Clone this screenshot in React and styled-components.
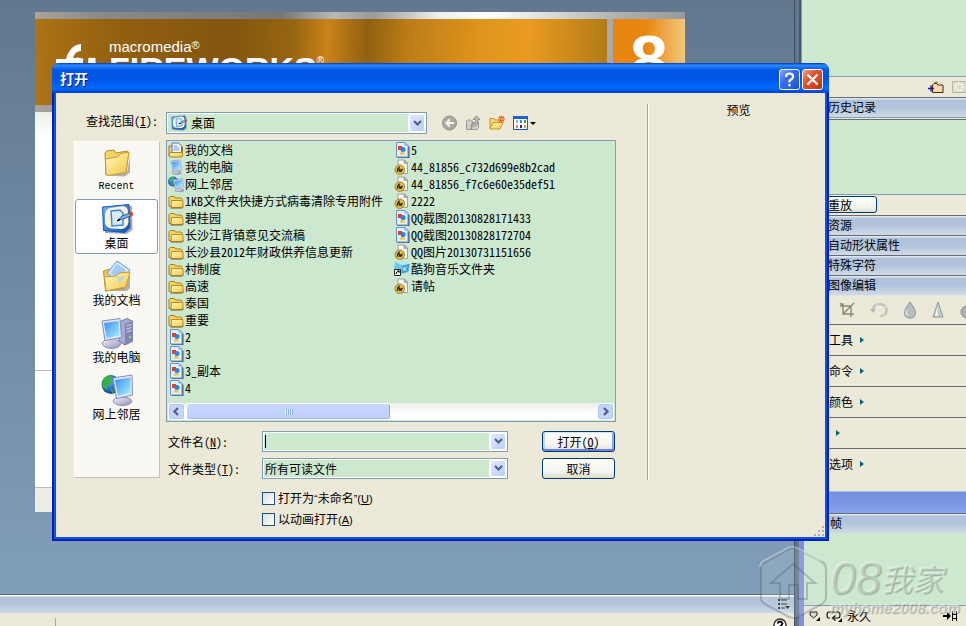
import React from "react";
import styled, { createGlobalStyle, css } from "styled-components";

const c = {
  green: "#cce8cf",
  beige: "#ece9d8",
  line: "#7f9db9",
  dark: "#6a6b70",
};

const song = '"Noto Sans CJK SC", "Liberation Sans", sans-serif';

const Global = createGlobalStyle`
  * { box-sizing: border-box; }
  body { margin: 0; background: ${c.beige}; font: 12px/16px ${song}; color: #000; }
  button, input, select { font: inherit; color: inherit; margin: 0; }
  button { padding: 0; border: 0; background: none; }
  ul { list-style: none; margin: 0; padding: 0; }
  svg { display: block; flex: none; }
`;

const Screen = styled.div`
  position: relative;
  display: grid;
  grid-template-columns: minmax(0, 1fr) 8px 164px;
  min-height: 100vh;
  overflow: hidden;
`;

/* ---------- workspace ---------- */

const Workspace = styled.div`
  display: flex;
  flex-direction: column;
`;

const Canvas = styled.div`
  flex: 1;
  padding: 12px 109px 82px 35px;
  background: linear-gradient(#61788f, #7f9cb9 95%);
`;

const StartPage = styled.div`
  display: flex;
  flex-direction: column;
  height: 100%;
  min-height: 500px;
  background: #fff;
`;

const BannerStrip = styled.div`
  height: 7px;
  background: linear-gradient(90deg, #aaa49a, #8a8a8a 10%, #777 38%, #b8b8b8 46%, #999 52%, #eee 62%, #fff 70%, #b0b0b0 90%, #999);
`;

const Banner = styled.div`
  display: grid;
  grid-template-columns: minmax(0, 1fr) 72px;
  gap: 6px;
  height: 86px;
  background: #a9a9a9;
`;

const BrandPanel = styled.div`
  display: flex;
  gap: 8px;
  padding: 22px 0 0 20px;
  overflow: hidden;
  color: #fff;
  background: linear-gradient(92deg, #ad7417, #92600f 14%, #845510 34%, #96650f 45%, #c98319 51%, #8f600f 58%, #bc7d17 65%, #e0951d 78%, #ea9b20 86%, #b07a18);
`;

const BrandText = styled.div`
  display: flex;
  flex-direction: column;
  font-family: "Liberation Sans", Arial, sans-serif;
`;

const Maker = styled.span`
  font-size: 15px;
  line-height: 11px;
  sup { font-size: 11px; line-height: 0; vertical-align: 3px; }
`;

const Product = styled.span`
  font-size: 34px;
  line-height: 34px;
  font-weight: 700;
  sup { font-size: 10px; line-height: 0; font-weight: 400; vertical-align: 17px; }
`;

const VersionPanel = styled.div`
  overflow: hidden;
  padding-top: 10px;
  text-align: center;
  color: #fff;
  font: 700 68px/60px "Liberation Sans", Arial, sans-serif;
  background: linear-gradient(90deg, #e8860f 45%, #f3c77c);
`;

const PageHead = styled.div`
  height: 26px;
  background: linear-gradient(#eeeee8, #fff);
`;
const PageTop = styled.div`
  flex: 2;
  border-bottom: 1px solid #bbb;
`;
const PageBottom = styled.div`
  flex: 1;
  border-bottom: 1px solid #bbb;
`;
const PageFoot = styled.div`
  height: 24px;
  background: #eeeee6;
`;

const DockTitle = styled.div`
  display: flex;
  justify-content: flex-end;
  align-items: center;
  height: 20px;
  padding-right: 4px;
  border-top: 1px solid #5f6d7c;
  border-bottom: 1px solid #e6eaf0;
  background: linear-gradient(#fff 1px, #b0c2da 2px, #b2c3db 50%, #cfd9e8);
`;

const DockBody = styled.div`
  display: flex;
  justify-content: space-between;
  height: 12px;
  padding: 4px 7px 0 55px;
  overflow: hidden;
  background: ${c.beige};
`;

const DockRule = styled.span`
  width: 1px;
  height: 12px;
  background: #aca899;
`;

const Splitter = styled.div`
  background: linear-gradient(90deg, #3f4f60 1px, #5d7388 1px, #64798f 5px, #45576a 5px, #45576a 7px, #7f9db9 7px);
`;

/* ---------- side panels ---------- */

const Side = styled.aside`
  display: flex;
  flex-direction: column;
  background: ${c.beige};
`;

const GreenArea = styled.div`
  flex: ${(p) => (p.$grow ? "1" : "none")};
  height: ${(p) => p.$h || "auto"};
  border-bottom: 1px solid ${c.line};
  background: ${c.green};
`;

const SideIcons = styled.div`
  display: flex;
  justify-content: flex-end;
  align-items: center;
  gap: 8px;
  height: 20px;
`;

const PanelTitle = styled.button`
  display: block;
  width: 100%;
  height: 20px;
  padding: 0 0 2px 26px;
  border-top: 1px solid ${c.dark};
  text-align: left;
  line-height: 17px;
  background: linear-gradient(#dfe6ef 1px, #b0c2da 2px, #b2c4db 50%, #d0dae7);
`;

const HistoryGap = styled.div`
  height: 3px;
  border-top: 1px solid ${c.line};
  border-bottom: 1px solid ${c.dark};
`;

const ReplayRow = styled.div`
  height: 20px;
  padding-left: 10px;
`;

const ReplayButton = styled.button`
  display: block;
  width: 65px;
  height: 17px;
  margin-top: 1px;
  padding-left: 15px;
  border: 1px solid #003c74;
  border-radius: 3px;
  text-align: left;
  line-height: 14px;
  background: linear-gradient(#fff, #f0f0ea 80%, #dcd8cc);
`;

const ToolStrip = styled.div`
  display: flex;
  align-items: center;
  gap: 15px;
  height: 29px;
  padding-left: 37px;
  overflow: hidden;
  border-top: 1px solid #dfe4ea;
`;

const MenuRow = styled.button`
  display: flex;
  align-items: center;
  gap: 7px;
  width: 100%;
  height: 31px;
  padding-left: 27px;
  border-top: 1px solid ${c.dark};
`;

const LowerGroup = styled.div`
  display: flex;
  flex: 1;
  flex-direction: column;
  margin: 12px 0 0 -3px;
  border-left: 5px solid #7e8fe2;
`;

const BlueBar = styled.div`
  height: 22px;
  border-top: 1px solid #a6bdf0;
  background: linear-gradient(#7491e0, #7b99e4 60%, #86a5ec);
`;

const FrameBar = styled.div`
  display: flex;
  align-items: center;
  gap: 5px;
  height: 20px;
  padding: 0 9px 0 5px;
  span { flex: 1; }
`;

/* ---------- dialog ---------- */

const Dialog = styled.section`
  position: absolute;
  top: 63px;
  left: 52px;
  right: 137px;
  border: 2px solid #0620b0;
  border-top: 0;
  border-radius: 7px 7px 0 0;
  background: ${c.beige};
`;

const TitleBar = styled.header`
  display: flex;
  align-items: center;
  gap: 2px;
  height: 30px;
  margin: 0 -2px;
  padding: 2px 6px 0 8px;
  border-radius: 7px 7px 0 0;
  background: linear-gradient(#0a49c8 1px, #3090ff 2px, #1a78f5 4px, #0458e6 7px, #0054e3 16px, #0066ff 23px, #0067ff 26px, #0046d0 29px);
`;

const Title = styled.h1`
  flex: 1;
  margin: 0;
  padding-bottom: 2px;
  color: #fff;
  font-size: 14px;
  line-height: 18px;
  text-shadow: 1px 1px 0 #0a1883;
`;

const CaptionButton = styled.button`
  display: grid;
  place-items: center;
  width: 21px;
  height: 21px;
  border: 1px solid #fff;
  border-radius: 3px;
  background: ${(p) =>
    p.$close
      ? "linear-gradient(135deg, #f0a088, #e0512c 40%, #d8401a 75%, #b52c08)"
      : "linear-gradient(135deg, #8aa8f5, #3a6ae8 40%, #2860ea 75%, #1848c0)"};
`;

const Body = styled.div`
  display: flex;
  align-items: flex-start;
  padding: 11px 0 10px 18px;
  border: 2px solid #0a50ea;
  border-top: 0;
`;

const Main = styled.form`
  flex: 1;
  min-width: 0;
  padding: 8px 31px 0 0;
`;

const Preview = styled.div`
  width: 178px;
  height: 376px;
  padding-left: 4px;
  border-left: 1px solid #aca899;
  box-shadow: inset 1px 0 #fff;
  line-height: 12px;
  text-align: center;
`;

const LookRow = styled.div`
  display: flex;
  align-items: center;
  height: 22px;
`;

const half = css`
  font-feature-settings: "hwid";
`;

const LookLabel = styled.label`
  ${half}
  width: 92px;
  padding: 0 0 4px 12px;
`;

const Combo = styled.div`
  position: relative;
  display: flex;
  align-items: center;
  flex: ${(p) => (p.$w ? "none" : "1")};
  width: ${(p) => p.$w || "auto"};
  height: ${(p) => p.$h || "21px"};
  padding-left: ${(p) => (p.$icon ? "4px" : "2px")};
  border: 1px solid ${c.line};
  background: ${c.green};
  box-shadow: inset 0 0 0 1px #fff;
`;

const field = css`
  flex: 1;
  align-self: stretch;
  min-width: 0;
  padding: 0 18px 0 1px;
  border: 0;
  outline: 0;
  appearance: none;
  background: none;
`;
const Select = styled.select`
  ${field}
  padding-left: ${(p) => p.$pad || "0"};
`;
const TextInput = styled.input`
  ${field}
`;
const Caret = styled.span`
  width: 1px;
  height: 13px;
  background: #000;
`;

const Drop = styled.span`
  position: absolute;
  top: 1px;
  right: 1px;
  bottom: 1px;
  display: grid;
  place-items: center;
  width: 17px;
  border: 1px solid #fff;
  border-left-width: 2px;
  border-radius: 3px;
  background: linear-gradient(135deg, #e0e9fe, #b9cdfb);
  pointer-events: none;
`;

const NavTools = styled.div`
  display: flex;
  align-items: center;
  gap: 8px;
  margin-left: 14px;
`;

const NavButton = styled.button`
  display: flex;
  align-items: center;
  gap: 2px;
`;

const Middle = styled.div`
  display: flex;
  align-items: flex-start;
  gap: 6px;
  margin-top: 6px;
`;

const Places = styled.nav`
  display: flex;
  flex-direction: column;
  gap: 2px;
  width: 86px;
  height: 337px;
  margin-top: 1px;
  border: 1px solid #fff;
  border-color: #fff #c6c3b4 #c6c3b4 #fff;
  background: #f9f8f3;
`;

const Place = styled.button`
  display: flex;
  flex-direction: column;
  align-items: center;
  height: 55px;
  margin-right: 1px;
  padding-top: 3px;
  border: 1px solid transparent;
  border-radius: 3px;
  line-height: 15px;
  ${(p) => p.$on && "border-color: #7f9db9; background: #fff;"}
  span { ${(p) => p.$mono && 'font: 10px/17px "Liberation Mono", monospace;'} }
`;

const Right = styled.div`
  flex: 1;
  min-width: 0;
`;

const ListBox = styled.div`
  display: flex;
  flex-direction: column;
  justify-content: space-between;
  height: 282px;
  padding: 1px;
  border: 1px solid ${c.line};
  background: ${c.green};
`;

const Files = styled.ul`
  display: grid;
  grid-template-rows: repeat(15, 17px);
  grid-template-columns: 226px 1fr;
  grid-auto-flow: column;
`;

const FileButton = styled.button`
  ${half}
  display: flex;
  align-items: center;
  gap: 1px;
  height: 17px;
  padding-bottom: 2px;
  line-height: 15px;
  white-space: nowrap;
`;

const ScrollBar = styled.div`
  display: flex;
  gap: 1px;
  height: 17px;
  background: linear-gradient(#eeede5, #fff 60%);
`;
const ScrollButton = styled.button`
  display: grid;
  place-items: center;
  flex: none;
  width: 17px;
  border: 1px solid #fff;
  border-radius: 3px;
  background: #c4d5fc;
  box-shadow: inset 0 0 0 1px #b5c8f5;
`;
const ScrollTrack = styled.div`
  flex: 1;
`;
const Thumb = styled.div`
  display: grid;
  place-items: center;
  width: 50%;
  height: 17px;
  border: 1px solid #fff;
  border-radius: 3px;
  background: linear-gradient(#cad8fe, #bbd0fc);
  box-shadow: inset -1px 0 #8aa6dc, inset 0 -1px #a5bcea;
`;

const FormGrid = styled.div`
  display: grid;
  grid-template-columns: 96px minmax(0, 1fr) 73px;
  align-items: center;
  row-gap: 6px;
  padding: 9px 1px 0 0;
`;
const FormLabel = styled.label`
  ${half}
  padding-left: 2px;
`;
const FormField = styled.div`
  display: flex;
  padding-right: 34px;
`;

const PushButton = styled.button`
  ${half}
  height: 21px;
  border: 1px solid #003c74;
  border-radius: 3px;
  line-height: 17px;
  background: linear-gradient(#fff, #f3f3ee 70%, #dedacb);
  ${(p) => p.$primary && "box-shadow: inset 0 1px #cee7ff, inset 0 -2px #6982ee, inset 2px 0 #bcd4f6, inset -2px 0 #89ade4;"}
`;

const Checks = styled.div`
  display: flex;
  flex-direction: column;
  gap: 5px;
  padding: 11px 0 0 96px;
`;
const CheckLabel = styled.label`
  display: flex;
  align-items: center;
  gap: 3px;
  height: 16px;
  line-height: 16px;
  input {
    appearance: none;
    width: 13px;
    height: 13px;
    border: 1px solid #1c5180;
    background: linear-gradient(135deg, #dcdcd7, #fff);
  }
`;
const Latin = styled.span`
  font-family: "Liberation Sans", Arial, sans-serif;
  font-size: 11px;
  line-height: 1;
`;

const Grip = styled.div`
  position: absolute;
  right: 2px;
  bottom: 2px;
`;

/* ---------- watermark ---------- */

const Watermark = styled.div`
  position: absolute;
  right: 4px;
  bottom: 5px;
  display: flex;
  align-items: flex-end;
  pointer-events: none;
  color: rgba(240, 244, 236, 0.35);
  text-shadow: 1px 1px 1px rgba(70, 90, 80, 0.4), -1px -1px 0 rgba(255, 255, 255, 0.3);
`;
const MarkText = styled.div`
  display: flex;
  flex-direction: column;
  width: 132px;
  margin-left: 2px;
  padding-bottom: 3px;
  white-space: nowrap;
`;
const MarkName = styled.span`
  display: flex;
  align-items: center;
  font-style: italic;
  font-size: 31px;
  line-height: 40px;
  b { font: italic 400 46px/40px "Liberation Sans", Arial, sans-serif; }
`;
const MarkSite = styled.span`
  font: italic 700 15px/20px "Liberation Sans", Arial, sans-serif;
`;

/* ---------- drawings ---------- */

const Defs = () => (
  <svg width="0" height="0" aria-hidden="true">
    <defs>
      <linearGradient id="fold" x1="0" y1="0" x2="1" y2="1">
        <stop offset="0" stopColor="#fffbc0" />
        <stop offset="1" stopColor="#f2c644" />
      </linearGradient>
      <linearGradient id="scr" x1="0" y1="0" x2="1" y2="1">
        <stop offset="0" stopColor="#3b8df0" />
        <stop offset="1" stopColor="#a8f0ff" />
      </linearGradient>
      <linearGradient id="blu" x1="0" y1="0" x2="1" y2="1">
        <stop offset="0" stopColor="#6cb8f8" />
        <stop offset="1" stopColor="#0c50b8" />
      </linearGradient>
      <linearGradient id="gry" x1="0" y1="0" x2="1" y2="1">
        <stop offset="0" stopColor="#f4f4fc" />
        <stop offset="1" stopColor="#9090b8" />
      </linearGradient>
      <radialGradient id="globe" cx="0.4" cy="0.35" r="0.7">
        <stop offset="0" stopColor="#58b0ff" />
        <stop offset="1" stopColor="#0a3a98" />
      </radialGradient>
    </defs>
  </svg>
);

const Folder16 = () => (
  <svg width="16" height="16" viewBox="0 0 16 16">
    <path d="M1 13.500V4.500L2 3.500h4.500l1 1.500h5.500l1.500 1.500v7z" fill="#f5d568" stroke="#b07c18" />
    <path d="M3.500 7.500h10.500l1 1v5l-1.500 1.200H3z" fill="url(#fold)" stroke="#c08a20" />
    <path d="M2.500 15h12l1-1.500" fill="none" stroke="#6a5420" strokeWidth=".8" />
  </svg>
);
const DocFolder16 = () => (
  <svg width="16" height="16" viewBox="0 0 16 16">
    <path d="M1 14V4h4l1 1h8.500v9z" fill="#f5d568" stroke="#a87410" />
    <path d="M4 1h6.500L13.500 4v7.500H4z" fill="#f6faff" stroke="#4a78c0" />
    <path d="M5.500 4h4M5.500 6h6M5.500 8h6" stroke="#6fa0e0" />
    <path d="M1 14l1-3.500h12.500V14l-1 1H2z" fill="url(#fold)" stroke="#b8821a" />
  </svg>
);
const Computer16 = () => (
  <svg width="16" height="16" viewBox="0 0 16 16">
    <path d="M4 13l4-2 5 2v1.500l-4 1-5-1z" fill="url(#gry)" stroke="#8888a8" strokeWidth=".6" />
    <path d="M3 2l9-1 1.500 10L5 12z" fill="#d4dcf4" stroke="#8a98c8" strokeWidth=".7" />
    <path d="M4 3l7-.8 1.200 7.500L5.600 10.700z" fill="url(#scr)" />
  </svg>
);
const Network16 = () => (
  <svg width="16" height="16" viewBox="0 0 16 16">
    <circle cx="5" cy="5.500" r="5" fill="url(#globe)" />
    <path d="M1 4c2-4 5-3 6-1-3 0-2 3-4 3zM2 8l3-1 1 3z" fill="#3cb848" />
    <path d="M7 14l4-2 5 1.500v1.500l-4 1-5-1z" fill="url(#gry)" stroke="#8888a8" strokeWidth=".6" />
    <path d="M5.500 4l9-1.500 1 8-8.500 1.800z" fill="#dce4fa" stroke="#8a98c8" strokeWidth=".7" />
    <path d="M6.600 5l7-1.200.8 5.700-6.700 1.400z" fill="url(#scr)" />
  </svg>
);
const Image16 = () => (
  <svg width="16" height="16" viewBox="0 0 16 16">
    <path d="M3.500 2h8l4 3v11h-12z" fill="#44597c" />
    <path d="M2.500.5h8.500l3 3v11.500h-11.500z" fill="#e4effc" stroke="#6890cc" />
    <path d="M10.500.5v3h3.500z" fill="#7cacec" />
    <path d="M5.500 12.500l2.500-4 3.500 4z" fill="#f6c21c" />
    <path d="M4 4h4v4H4z" fill="#f23a10" />
    <circle cx="9" cy="7.500" r="2.500" fill="#1f88ee" />
  </svg>
);
const Fw16 = () => (
  <svg width="16" height="16" viewBox="0 0 16 16">
    <path d="M4 1h6.500L13.500 4v10.500H4z" fill="#f6f6f4" stroke="#a0a0a0" />
    <path d="M10 1v3.500h3.500z" fill="#b0b0b0" stroke="#888" strokeWidth=".5" />
    <circle cx="5.800" cy="10.700" r="4.800" fill="#f0bc34" stroke="#8a7430" strokeWidth=".8" />
    <path d="M3 12.800l1.500-4q.5-1 1.500-.6M3 10h2.500l-.2 2.200 1.200-.2.500-1.700.3 1.700 1.200-2.200" fill="none" stroke="#14284c" strokeWidth="1.200" />
  </svg>
);
const Kugou16 = () => (
  <svg width="16" height="16" viewBox="0 0 16 16">
    <path d="M1 1l9-.5 6 2-1.500 8.500-8 2L0 9z" fill="#6fc8ee" />
    <path d="M1 1l9-.5 6 2-7 2z" fill="#b5ecfa" />
    <path d="M8.500 4.500L15.500 3 14 10.500l-6 2z" fill="#3a9fd8" />
    <path d="M10 6v4m3-4.500l-2.500 2.500 2 1.500" stroke="#e4faff" fill="none" />
    <path d="M.5 8.500h6v6h-6z" fill="#fff" stroke="#222" />
    <path d="M2 13q0-3 3-2.500M3.500 9.800h1.700v2" fill="none" stroke="#000" />
  </svg>
);
const Desktop = ({ size }) => (
  <svg width={size} height={size} viewBox="0 0 32 32">
    <path d="M4 5l27-2 .5 24-6 4L4 30z" fill="#55617c" opacity=".55" />
    <path d="M1.500 4L28 1.500l1 23-5 5L2.500 27.500z" fill="url(#blu)" stroke="#1c58b0" />
    <path d="M9 5l13-2q5 1 5 6l.5 10q-1 6-7 7l-10-.5q-6-1-6.500-6L4 11q1-5 5-6z" fill="#fbf3d4" />
    <path d="M10 8l9-1 3 3v12l-11 1z" fill="#d8ecfd" stroke="#3c8ae0" strokeWidth="1.500" />
    <path d="M17 17l4-4 8-3 1 3-8 3z" fill="#80b6e8" stroke="#285890" />
    <circle cx="30" cy="11" r="2" fill="#e03818" />
    <path d="M16 18l2-2 1 1z" fill="#000" stroke="#000" />
  </svg>
);
const Folder32 = () => (
  <svg width="32" height="32" viewBox="0 0 32 32">
    <path d="M6 29.500l20-3 3-16v16l-5 4z" fill="#6a6a60" opacity=".5" />
    <path d="M4 7l2-2 7-1 2 3 11-2 1.500 1.500L25 26.500 5 29z" fill="#f3d468" stroke="#b58d28" />
    <path d="M4.500 13l13-2.500 2-3L28 6l-3 20.500-18 3-2-1.500z" fill="url(#fold)" stroke="#c69b30" />
  </svg>
);
const Docs32 = () => (
  <svg width="32" height="32" viewBox="0 0 32 32">
    <path d="M5 31l20-3 4-15v15l-3 3z" fill="#6a6a60" opacity=".5" />
    <path d="M2.500 11l7-2 3 3 14-1-2 17-20 3z" fill="#f0cb58" stroke="#b58d28" />
    <path d="M16 1l13 9-10 14L6 13z" fill="#cfe4fb" stroke="#6a9ad8" />
    <path d="M16 4l9 6.500-7 9-8-6.500z" fill="#8fbcf0" opacity=".7" />
    <path d="M3.500 17l12-1 3-3 10.500-1-4 15-20 4z" fill="url(#fold)" stroke="#c69b30" />
    <path d="M16 17l8-1-6 8z" fill="#a8d4f4" opacity=".8" />
  </svg>
);
const Computer32 = () => (
  <svg width="32" height="32" viewBox="0 0 32 32">
    <path d="M18 5l8-3.500 6 3V24l-8 4-6-4z" fill="#a7a9d0" stroke="#7478a8" />
    <path d="M24 7l8-3v20l-8 4z" fill="#8084b4" />
    <path d="M25.500 9l5-1.500M25.500 12l5-1.500M25.500 15l5-1.500" stroke="#d8dcf4" />
    <circle cx="29" cy="20" r="1.300" fill="#74e860" />
    <path d="M1 26q2-4 8-4 8 0 11 4-1 5-9 5.500Q2 31 1 26z" fill="url(#gry)" stroke="#8c8cac" />
    <path d="M9 22l6-1 1 5-6 1z" fill="#c4c4dc" />
    <path d="M1 4l18-2.500 1.500 19L4 23.500z" fill="#e0e6f8" stroke="#8490bc" />
    <path d="M3 6l14.500-2 1 14.500L5.500 21z" fill="url(#scr)" />
  </svg>
);
const Network32 = () => (
  <svg width="32" height="32" viewBox="0 0 32 32">
    <circle cx="10" cy="10.500" r="9.500" fill="url(#globe)" />
    <path d="M3 4q5-4 9-3l-3 5 2 3-4 2-1 5-4-3q-2-5 1-9zM9 15l4 1-1 4z" fill="#38b040" />
    <path d="M12 27q2-4 9-4 8 0 10 4-1 4-9 4.500-8 0-10-4.500z" fill="url(#gry)" stroke="#8c8cac" />
    <path d="M12 4l19-3 .5 20-16 3.500z" fill="#e0e6f8" stroke="#8490bc" />
    <path d="M14 6l15.500-2.500v15.500L17 21.500z" fill="url(#scr)" />
  </svg>
);
const Back = () => (
  <svg width="16" height="16" viewBox="0 0 16 16">
    <circle cx="8.500" cy="8" r="7" fill="#aaa9a2" stroke="#8f8e88" />
    <path d="M13 8H5.500M8.800 4.500L5.300 8l3.500 3.500" fill="none" stroke="#f6f5ee" strokeWidth="2" />
  </svg>
);
const UpLevel = () => (
  <svg width="16" height="16" viewBox="0 0 16 16">
    <path d="M1.500 14.500V6l1-1h3l1 1h1L6 14.500zM6 14.500l2-7h5.500v5l-1.500 2z" fill="#d2d0c8" stroke="#96958f" />
    <path d="M6 10q5-1 4.500-5.500H8L11.500.7 15 4.500h-2Q14 11 6 12z" fill="#bab9b3" stroke="#8a8984" strokeWidth=".8" />
  </svg>
);
const NewFolder = () => (
  <svg width="16" height="16" viewBox="0 0 16 16">
    <path d="M1 13.500v-10h4l1 1.500h5v3" fill="#f6d86c" stroke="#c4952c" />
    <path d="M1 14l3-6.500h10l-3 6.500z" fill="url(#fold)" stroke="#c4952c" />
    <path d="M12.500.5v7M9 4h7M10 1.500l5 5M15 1.500l-5 5" stroke="#f05020" strokeWidth="1.200" />
    <circle cx="12.500" cy="4" r="1.300" fill="#fcc040" />
  </svg>
);
const Views = () => (
  <svg width="15" height="14" viewBox="0 0 15 14">
    <path d="M.5.5h14v13H.5z" fill="#fff" stroke="#0c5ad0" />
    <path d="M0 0h15v3H0z" fill="#1464d8" />
    <path d="M3 4h2v3H3z" fill="#a8b4c8" />
    <path d="M7 4h2v3H7z" fill="#48b" />
    <path d="M11 4h2v3h-2z" fill="#38a038" />
    <path d="M3 9h2v3H3z" fill="#f08060" />
    <path d="M7 9h2v3H7z" fill="#103890" />
    <path d="M11 9h2v3h-2z" fill="#c8a820" />
  </svg>
);
const DownTri = () => (
  <svg width="6" height="3" viewBox="0 0 6 3"><path d="M0 0h6L3 3z" /></svg>
);
const Chevron = ({ d = "M1 2l3.500 3.500L8 2" }) => (
  <svg width="9" height="9" viewBox="0 0 9 9">
    <path d={d} fill="none" stroke="#4d6185" strokeWidth="2.200" />
  </svg>
);
const RightTri = () => (
  <svg width="4" height="6" viewBox="0 0 4 6"><path d="M0 0l4 3-4 3z" fill="#006478" /></svg>
);

const Logo = () => (
  <svg width="46" height="44" viewBox="0 0 46 44">
    <path d="M26 3v7q-6 0-8 7h4l-6 27H6l6-19H1v-7h10Q15 4 26 3z" fill="#fff" />
    <path d="M25 17q-4 22 4 22 6 0 8-22 0 22 5 22" fill="none" stroke="#fff" strokeWidth="7" />
  </svg>
);

const CropTool = () => (
  <svg width="16" height="16" viewBox="0 0 16 16">
    <path d="M4 1v11h11M1 4h11v11M1 1l3 3M5 11l10-10" fill="none" stroke="#8d8c84" strokeWidth="1.500" />
  </svg>
);
const RotateTool = () => (
  <svg width="18" height="16" viewBox="0 0 18 16">
    <path d="M3 9q0-7 7-7 7 1 6.500 7-1 5-6 5" fill="none" stroke="#c2c2c0" strokeWidth="2.500" strokeDasharray="8 1" />
    <path d="M0 7h6l-3 4z" fill="#b8b8b6" />
  </svg>
);
const DropTool = () => (
  <svg width="14" height="18" viewBox="0 0 14 18">
    <path d="M7 1q6 8 5.500 11.500Q12 17 7 17t-5.500-4.500Q1 9 7 1z" fill="#b7bfbf" stroke="#8b9496" />
    <path d="M4 9q-2 4 1 5" stroke="#fff" fill="none" />
  </svg>
);
const SharpTool = () => (
  <svg width="12" height="18" viewBox="0 0 12 18">
    <path d="M6 1l5 15H1z" fill="#c2cccc" stroke="#929a9a" />
    <path d="M5.500 5v10H3z" fill="#f6f8f8" />
  </svg>
);
const BallTool = () => (
  <svg width="14" height="18" viewBox="0 0 14 18">
    <circle cx="8" cy="11" r="6" fill="#b0b0ac" stroke="#85857f" />
  </svg>
);

const HexMark = () => (
  <svg width="70" height="76" viewBox="0 0 70 76" fill="none" strokeWidth="2">
    <g stroke="#405868" strokeOpacity=".3">
      <path d="M3 23q0-4 4-6L31 4q5-2 9 0l24 13q4 2 4 7v28q0 4-4 7L40 72q-4 2-9 0L7 59q-4-2-4-6z" fill="#d8e4dc" fillOpacity=".16" />
      <path d="M13 38l22-19 22 19h-8v16h-9V40h-9v14h-9V38z" strokeWidth="2" />
    </g>
    <path d="M2 22q0-4 4-6L30 3q5-2 9 0l24 13" stroke="#fff" strokeOpacity=".35" />
  </svg>
);

/* ---------- data ---------- */

const files = [
  [DocFolder16, "我的文档"],
  [Computer16, "我的电脑"],
  [Network16, "网上邻居"],
  [Folder16, "1KB文件夹快捷方式病毒清除专用附件"],
  [Folder16, "碧桂园"],
  [Folder16, "长沙江背镇意见交流稿"],
  [Folder16, "长沙县2012年财政供养信息更新"],
  [Folder16, "村制度"],
  [Folder16, "高速"],
  [Folder16, "泰国"],
  [Folder16, "重要"],
  [Image16, "2"],
  [Image16, "3"],
  [Image16, "3_副本"],
  [Image16, "4"],
  [Image16, "5"],
  [Fw16, "44_81856_c732d699e8b2cad"],
  [Fw16, "44_81856_f7c6e60e35def51"],
  [Fw16, "2222"],
  [Image16, "QQ截图20130828171433"],
  [Image16, "QQ截图20130828172704"],
  [Fw16, "QQ图片20130731151656"],
  [Kugou16, "酷狗音乐文件夹"],
  [Fw16, "请帖"],
];

const places = [
  [<Folder32 key="i" />, "Recent"],
  [<Desktop key="i" size={32} />, "桌面"],
  [<Docs32 key="i" />, "我的文档"],
  [<Computer32 key="i" />, "我的电脑"],
  [<Network32 key="i" />, "网上邻居"],
];

const StartScreen = () => (
  <Workspace>
    <Canvas>
      <StartPage>
        <BannerStrip />
        <Banner>
          <BrandPanel>
            <Logo />
            <BrandText>
              <Maker>macromedia<sup>®</sup></Maker>
              <Product>FIREWORKS<sup>®</sup></Product>
            </BrandText>
          </BrandPanel>
          <VersionPanel>8</VersionPanel>
        </Banner>
        <BannerStrip />
        <PageHead />
        <PageTop />
        <PageBottom />
        <PageFoot />
      </StartPage>
    </Canvas>
    <DockTitle>
      <svg width="13" height="12" viewBox="0 0 13 12">
        <path d="M1 1h2v2H1zM1 5h2v2H1zM1 9h2v2H1zM4 1.500h6v1H4zM4 5.500h6v1H4zM4 9.500h4v1H4zM8 8h5l-2.500 3z" fill="#222" />
      </svg>
    </DockTitle>
    <DockBody>
      <DockRule />
      <svg width="14" height="14" viewBox="0 0 14 14">
        <circle cx="7" cy="7" r="6" fill="#fff" stroke="#333" strokeWidth="1.500" />
        <path d="M4.500 5.500Q5 3.500 7 3.500t2.500 2Q9 7 7 8.500v2" fill="none" stroke="#000" strokeWidth="1.800" />
      </svg>
    </DockBody>
  </Workspace>
);

const SidePanels = () => (
  <Side>
    <GreenArea $h="77px" />
    <SideIcons>
      <svg width="16" height="13" viewBox="0 0 16 13">
        <path d="M4.500 11.500V4l1.500-1.500h3l1 1.500h5v7.500z" fill="#fcd8a8" stroke="#3c2c18" />
        <path d="M6 2q2-2 4-.5" stroke="#8a7a30" fill="none" />
        <path d="M0 7.500h6M3 4.500v6" stroke="#2018a0" strokeWidth="1.500" fill="none" />
      </svg>
      <svg width="14" height="12" viewBox="0 0 14 12">
        <path d="M.5.500h14v11H.5z" fill="#dedccd" stroke="#b8b6a8" />
        <circle cx="7" cy="6" r="3.500" fill="none" stroke="#fff" strokeWidth="2" strokeDasharray="1.500 1.500" />
      </svg>
    </SideIcons>
    <PanelTitle>历史记录</PanelTitle>
    <HistoryGap />
    <GreenArea $h="75px" />
    <ReplayRow>
      <ReplayButton>重放</ReplayButton>
    </ReplayRow>
    <PanelTitle>资源</PanelTitle>
    <PanelTitle>自动形状属性</PanelTitle>
    <PanelTitle>特殊字符</PanelTitle>
    <PanelTitle>图像编辑</PanelTitle>
    <ToolStrip>
      <CropTool />
      <RotateTool />
      <DropTool />
      <SharpTool />
      <BallTool />
    </ToolStrip>
    {["工具", "命令", "颜色", "", "选项"].map((t) => (
      <MenuRow key={t} aria-label={t || "子菜单"}>
        <span>{t}</span>
        <RightTri />
      </MenuRow>
    ))}
    <LowerGroup>
      <BlueBar />
      <PanelTitle>帧</PanelTitle>
      <GreenArea $grow />
      <FrameBar>
        <svg width="12" height="12" viewBox="0 0 12 12">
          <path d="M1 2h7v3L4.500 8 1 5z" fill="#d8d8d0" stroke="#222" />
          <path d="M11 7v4H7z" />
        </svg>
        <svg width="16" height="12" viewBox="0 0 16 12">
          <path d="M4 8H2.500Q1 8 1 5t2-3h9q2 0 2 3t-2 3H8M9.500 5.500L6.500 8l3 2.500" fill="none" stroke="#111" strokeWidth="1.200" />
          <path d="M16 8v4h-4z" />
        </svg>
        <span>永久</span>
        <svg width="14" height="10" viewBox="0 0 14 10">
          <path d="M0 4h4V1l4 4-4 4V6H0z" />
          <path d="M9.500 0v10M13.500 0v10M9.500 3.500h4M9.500 7.500h4" stroke="#000" />
        </svg>
      </FrameBar>
    </LowerGroup>
  </Side>
);

const OpenDialog = () => (
  <Dialog role="dialog" aria-labelledby="dlg-title">
    <TitleBar>
      <Title id="dlg-title">打开</Title>
      <CaptionButton aria-label="帮助">
        <svg width="13" height="15" viewBox="0 0 13 15">
          <path d="M3 5q0-3.500 3.500-3.500T10 4.500q0 2-2 3T6.500 10.500M6.500 12v2.200" fill="none" stroke="#fff" strokeWidth="2.200" />
        </svg>
      </CaptionButton>
      <CaptionButton $close aria-label="关闭">
        <svg width="13" height="13" viewBox="0 0 13 13">
          <path d="M1.500 1.500l10 10M11.500 1.500l-10 10" stroke="#fff" strokeWidth="2.200" />
        </svg>
      </CaptionButton>
    </TitleBar>
    <Body>
      <Main onSubmit={(e) => e.preventDefault()}>
        <LookRow>
          <LookLabel htmlFor="look">查找范围(<u>I</u>):</LookLabel>
          <Combo $w="261px" $h="22px" $icon>
            <Desktop size={16} />
            <Select id="look" $pad="4px">
              <option>桌面</option>
            </Select>
            <Drop><Chevron /></Drop>
          </Combo>
          <NavTools>
            <NavButton type="button" aria-label="后退"><Back /></NavButton>
            <NavButton type="button" aria-label="向上一级"><UpLevel /></NavButton>
            <NavButton type="button" aria-label="新建文件夹"><NewFolder /></NavButton>
            <NavButton type="button" aria-label="查看"><Views /><DownTri /></NavButton>
          </NavTools>
        </LookRow>
        <Middle>
          <Places>
            {places.map(([icon, name]) => (
              <Place type="button" key={name} $on={name === "桌面"} $mono={name === "Recent"}>
                {icon}
                <span>{name}</span>
              </Place>
            ))}
          </Places>
          <Right>
            <ListBox>
              <Files>
                {files.map(([Icon, name]) => (
                  <li key={name}>
                    <FileButton type="button"><Icon />{name}</FileButton>
                  </li>
                ))}
              </Files>
              <ScrollBar>
                <ScrollButton type="button" aria-label="向左滚动"><Chevron d="M6 1L2.500 4.500 6 8" /></ScrollButton>
                <ScrollTrack>
                  <Thumb>
                    <svg width="8" height="6" viewBox="0 0 8 6">
                      <path d="M.5 0v6M2.500 0v6M4.500 0v6M6.500 0v6" stroke="#eef4fe" />
                      <path d="M1.500 0v6M3.500 0v6M5.500 0v6M7.500 0v6" stroke="#8cb0f8" />
                    </svg>
                  </Thumb>
                </ScrollTrack>
                <ScrollButton type="button" aria-label="向右滚动"><Chevron d="M3 1l3.500 3.500L3 8" /></ScrollButton>
              </ScrollBar>
            </ListBox>
            <FormGrid>
              <FormLabel htmlFor="fname">文件名(<u>N</u>):</FormLabel>
              <FormField>
                <Combo>
                  <Caret />
                  <TextInput id="fname" type="text" />
                  <Drop><Chevron /></Drop>
                </Combo>
              </FormField>
              <PushButton $primary>打开(<u>O</u>)</PushButton>
              <FormLabel htmlFor="ftype">文件类型(<u>T</u>):</FormLabel>
              <FormField>
                <Combo>
                  <Select id="ftype">
                    <option>所有可读文件</option>
                  </Select>
                  <Drop><Chevron /></Drop>
                </Combo>
              </FormField>
              <PushButton type="button">取消</PushButton>
            </FormGrid>
            <Checks>
              <CheckLabel>
                <input type="checkbox" />
                <span>打开为<Latin>“</Latin>未命名<Latin>”(<u>U</u>)</Latin></span>
              </CheckLabel>
              <CheckLabel>
                <input type="checkbox" />
                <span>以动画打开<Latin>(<u>A</u>)</Latin></span>
              </CheckLabel>
            </Checks>
          </Right>
        </Middle>
      </Main>
      <Preview>预览</Preview>
    </Body>
    <Grip>
      <svg width="12" height="12" viewBox="0 0 12 12">
        <path d="M9 1h2v2H9zM5 5h2v2H5zM9 5h2v2H9zM1 9h2v2H1zM5 9h2v2H5zM9 9h2v2H9z" fill="#b4b09c" />
      </svg>
    </Grip>
  </Dialog>
);

export default function App() {
  return (
    <>
      <Global />
      <Screen>
        <StartScreen />
        <Splitter />
        <SidePanels />
        <OpenDialog />
        <Watermark>
          <HexMark />
          <MarkText>
            <MarkName><b>08</b>我家</MarkName>
            <MarkSite>myhome2008.com</MarkSite>
          </MarkText>
        </Watermark>
      </Screen>
      <Defs />
    </>
  );
}
